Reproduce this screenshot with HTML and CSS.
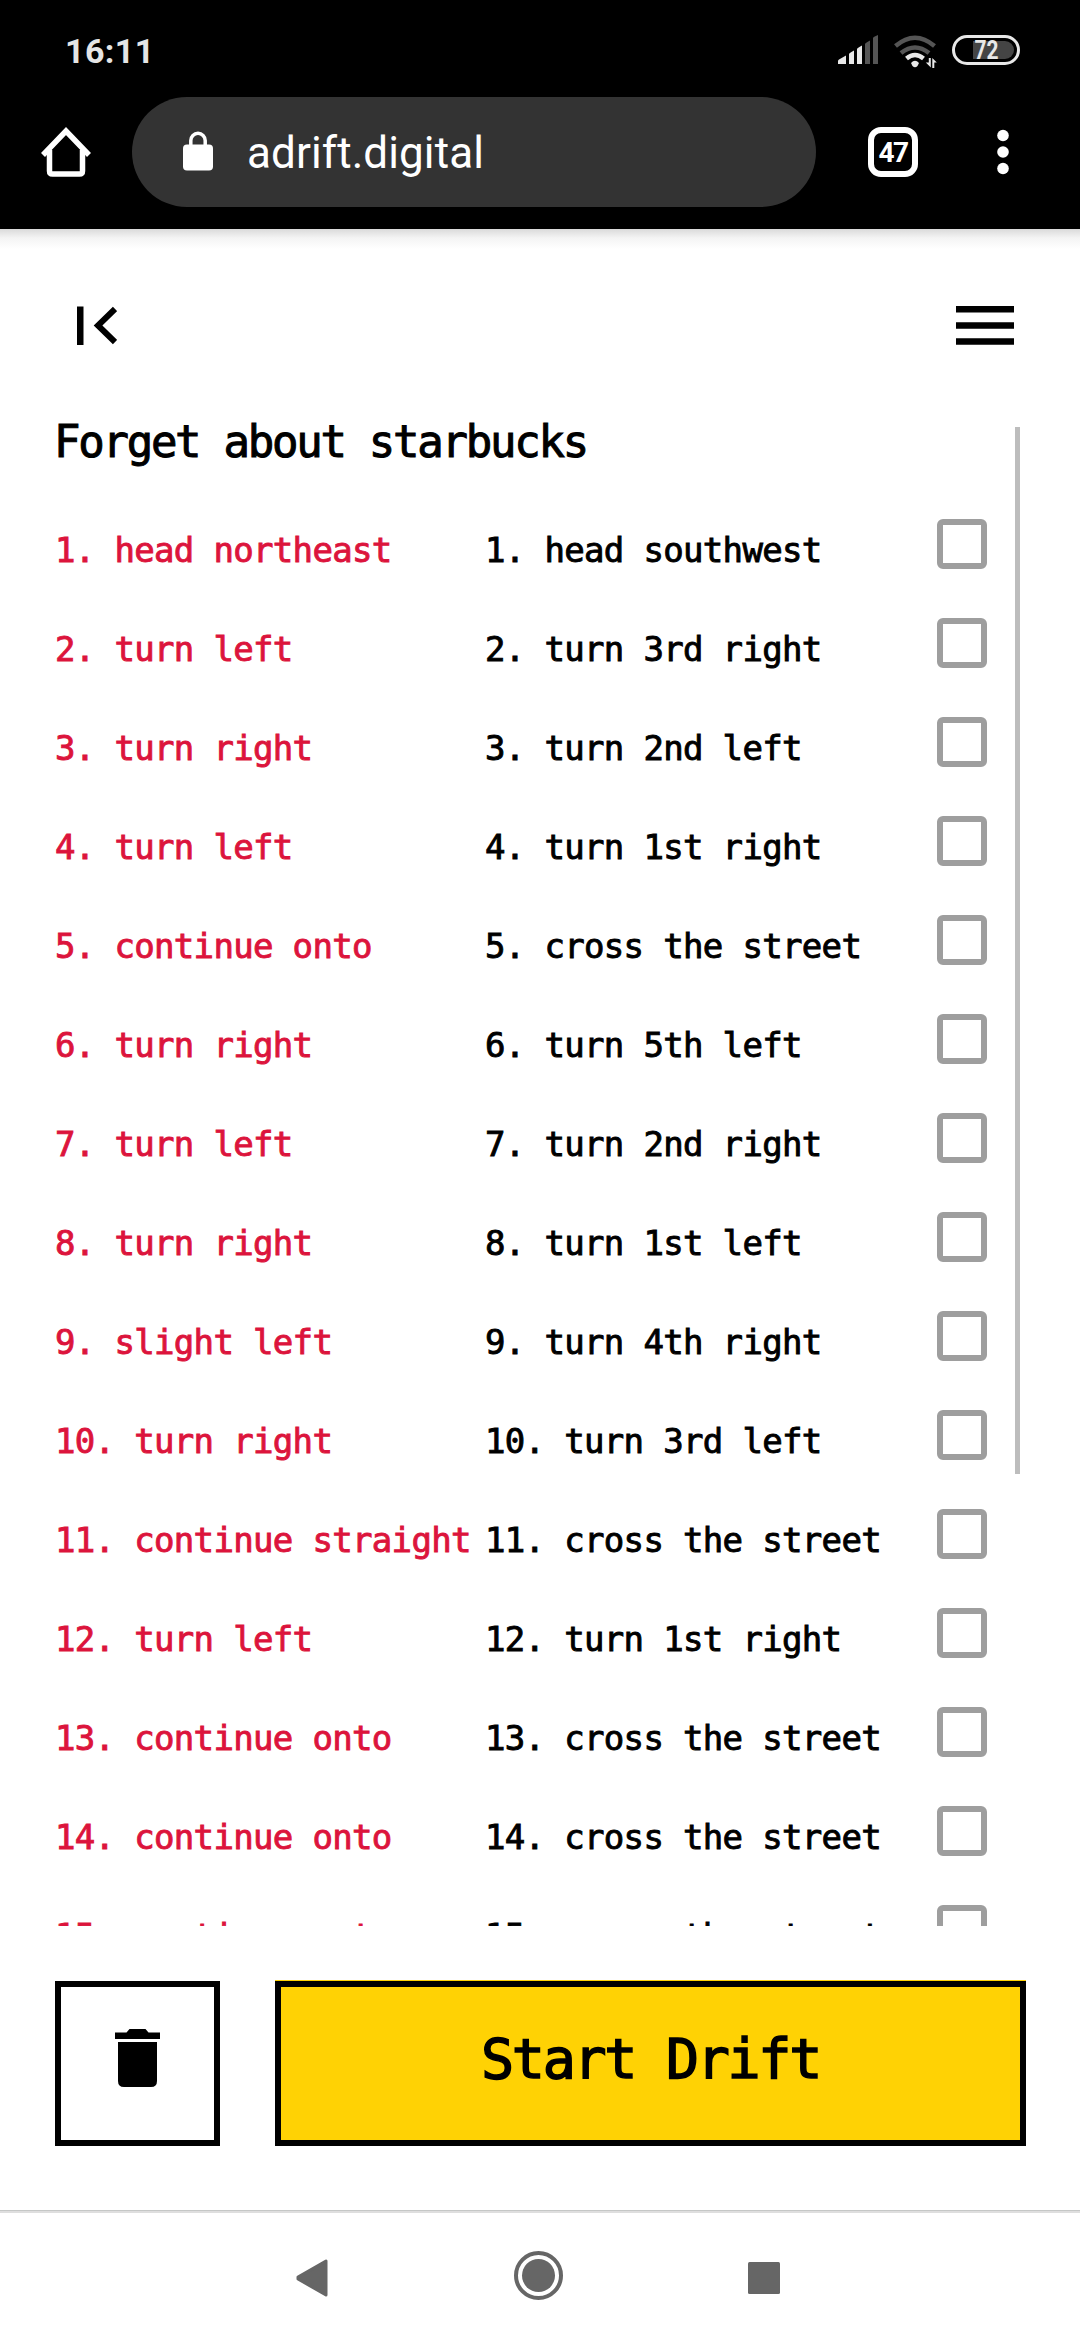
FILE: index.html
```html
<!DOCTYPE html>
<html lang="en">
<head>
<meta charset="utf-8">
<title>adrift.digital</title>
<link rel="stylesheet" href="styles.css">
</head>
<body>
<div class="screen">
  <header class="chrome">
    <div class="status">
      <span class="clock">16:11</span>
      <svg class="signals" width="190" height="40" viewBox="834 30 190 40">
        <g fill="#e8e8e8">
          <path d="M838 64v-3q0-1 1-1.500l7-4V64zM849 64V54q0-1 5-3.500V64zM857 64V49q0-1 5-3.500V64z"/>
          <path fill="#555" d="M865 64V44q0-1 5-3.500V64zM873 64V38q0-1 5-3V64z"/>
        </g>
        <g fill="none" stroke-width="4.500" stroke-linecap="butt">
          <path stroke="#555" d="M895.500 46q19.500-16.500 39 0M901 53q14-11 28 0"/>
          <path stroke="#e8e8e8" d="M906.500 58.500q8.500-7 17 0"/>
        </g>
        <path fill="#e8e8e8" d="M911 63q4-4.500 8 0l-1.500 3q-2.500 2.500-5 0zM928.800 58h2v9.500l-5-5h3zM932.300 68v-10l4.500 4.500h-2.500V68z"/>
        <path fill="#444" d="M973 41h32a9 9 0 0 1 0 18h-32z"/>
        <rect x="953.500" y="36.500" width="65" height="27" rx="13.500" fill="none" stroke="#e8e8e8" stroke-width="3"/>
        <text class="level" x="986.500" y="58.500" text-anchor="middle" textLength="24" lengthAdjust="spacingAndGlyphs">72</text>
      </svg>
    </div>
    <div class="toolbar">
      <svg class="home" width="50" height="50" viewBox="0 0 50 50" fill="none" stroke="#fff" stroke-width="5.500" stroke-linejoin="round">
        <path d="M2 28 25 4l23 24" stroke-linejoin="miter"/><path d="M8.500 23v21q0 3 3 3h27q3 0 3-3V23"/>
      </svg>
      <div class="omnibox">
        <svg width="30" height="40" viewBox="0 0 30 40"><rect y="13.500" width="30" height="26" rx="4" fill="#fff"/><path d="M7.800 15V9.500a7.200 7.200 0 0 1 14.400 0V15" fill="none" stroke="#fff" stroke-width="3.500"/></svg>
        <span class="url">adrift.digital</span>
      </div>
      <span class="tabs">47</span>
      <svg class="dots" width="12" height="46" viewBox="0 0 12 46" fill="#fff"><circle cx="6" cy="6.500" r="5.800"/><circle cx="6" cy="23" r="5.800"/><circle cx="6" cy="39.500" r="5.800"/></svg>
    </div>
  </header>

  <nav class="topnav">
    <svg width="40" height="40" viewBox="0 0 40 40"><path d="M0 .5h6.500V39H0z"/><path d="M38 3 21 19.500 38 36" fill="none" stroke="#000" stroke-width="6"/></svg>
    <svg width="58" height="40" viewBox="0 0 58 40"><path d="M0 0h58v6.500H0zM0 16.200h58v6.500H0zM0 32.300h58v6.500H0z"/></svg>
  </nav>

  <main class="list">
    <div class="steps">
      <h1>Forget about starbucks</h1>
      <div class="row"><span class="from">1. head northeast</span><span>1. head southwest</span><i class="box"></i></div>
      <div class="row"><span class="from">2. turn left</span><span>2. turn 3rd right</span><i class="box"></i></div>
      <div class="row"><span class="from">3. turn right</span><span>3. turn 2nd left</span><i class="box"></i></div>
      <div class="row"><span class="from">4. turn left</span><span>4. turn 1st right</span><i class="box"></i></div>
      <div class="row"><span class="from">5. continue onto</span><span>5. cross the street</span><i class="box"></i></div>
      <div class="row"><span class="from">6. turn right</span><span>6. turn 5th left</span><i class="box"></i></div>
      <div class="row"><span class="from">7. turn left</span><span>7. turn 2nd right</span><i class="box"></i></div>
      <div class="row"><span class="from">8. turn right</span><span>8. turn 1st left</span><i class="box"></i></div>
      <div class="row"><span class="from">9. slight left</span><span>9. turn 4th right</span><i class="box"></i></div>
      <div class="row"><span class="from">10. turn right</span><span>10. turn 3rd left</span><i class="box"></i></div>
      <div class="row"><span class="from">11. continue straight</span><span>11. cross the street</span><i class="box"></i></div>
      <div class="row"><span class="from">12. turn left</span><span>12. turn 1st right</span><i class="box"></i></div>
      <div class="row"><span class="from">13. continue onto</span><span>13. cross the street</span><i class="box"></i></div>
      <div class="row"><span class="from">14. continue onto</span><span>14. cross the street</span><i class="box"></i></div>
      <div class="row"><span class="from">15. continue onto</span><span>15. cross the street</span><i class="box"></i></div>
    </div>
    <div class="thumb"></div>
  </main>

  <div class="actions">
    <button class="trash" aria-label="Delete">
      <svg width="45" height="58" viewBox="0 0 45 58"><path d="M0 3.500h11.500L14.500 0h16L33.500 3.500H45V10H0zM3 13h39v39q0 6-6 6H9q-6 0-6-6z"/></svg>
    </button>
    <button class="start">Start Drift</button>
  </div>

  <footer class="sysnav">
    <svg width="32" height="38" viewBox="0 0 32 38"><path d="M2 18 30 2v34L2 20z" fill="#666" stroke="#666" stroke-width="3" stroke-linejoin="round"/></svg>
    <svg class="circle" width="49" height="49" viewBox="0 0 49 49"><circle cx="24.500" cy="24.500" r="22.500" fill="none" stroke="#666" stroke-width="4"/><circle cx="24.500" cy="24.500" r="16.500" fill="#666"/></svg>
    <svg width="32" height="32" viewBox="0 0 32 32"><rect width="32" height="32" rx="1.500" fill="#666"/></svg>
  </footer>
</div>
</body>
</html>
```
FILE: styles.css
```css
* { box-sizing: border-box; }
body { margin: 0; background: #fff; }
svg { display: block; flex: none; }
.screen {
  width: 1080px;
  height: 2340px;
  overflow: hidden;
  display: flex;
  flex-direction: column;
  background: #fff;
  color: #000;
  font-family: "DejaVu Sans Mono", "Liberation Mono", monospace;
}
.chrome {
  height: 229px;
  flex: none;
  background: #000;
  color: #fff;
  font-family: Roboto, sans-serif;
}
.status {
  height: 97px;
  padding: 30px 56px 0 65px;
  display: flex;
  justify-content: space-between;
}
.clock {
  font-size: 34px;
  line-height: 42px;
  font-weight: 700;
  letter-spacing: .4px;
  color: #e5e5e5;
}
.level { font: 700 25px Roboto, sans-serif; fill: #e8e8e8; }
.toolbar {
  height: 110px;
  padding: 0 71px 0 41px;
  display: flex;
  align-items: center;
}
.omnibox {
  width: 684px;
  height: 110px;
  margin-left: 41px;
  padding-left: 51px;
  border-radius: 55px;
  background: #333;
  display: flex;
  align-items: center;
  gap: 34px;
  font-size: 44px;
  letter-spacing: .1px;
}
.url { padding-top: 2px; }
.omnibox svg { margin-bottom: 2px; }
.tabs {
  width: 50px;
  height: 50px;
  margin-left: 52px;
  border: 6px solid #fff;
  border-radius: 13px;
  font-size: 28px;
  font-weight: 700;
  line-height: 39px;
  text-align: center;
  letter-spacing: -1.500px;
}
.dots { margin-left: auto; }
.topnav {
  height: 178px;
  flex: none;
  padding: 77px 66px 0 77px;
  display: flex;
  justify-content: space-between;
  background: linear-gradient(#dadada, #f4f4f4 9px, #fff 20px);
}
.list {
  height: 1519px;
  flex: none;
  overflow: hidden;
  padding: 20px 60px 0 55px;
  display: flex;
  justify-content: space-between;
}
h1 {
  height: 92px;
  margin: 0 0 0 -1px;
  font-size: 44px;
  font-weight: 400;
  line-height: 30px;
  letter-spacing: -2.270px;
  -webkit-text-stroke: 1px #000;
}
.row {
  height: 99px;
  display: grid;
  grid-template-columns: 430px 452px 50px;
  align-items: start;
  font-size: 34px;
  line-height: 62px;
  letter-spacing: -.670px;
  white-space: nowrap;
  -webkit-text-stroke: .9px currentColor;
}
.from { color: #dc143c; }
.box {
  width: 50px;
  height: 50px;
  border: 6px solid #9e9e9e;
  border-radius: 6px;
}
.thumb { width: 5px; height: 1047px; background: #bdbdbd; }
.actions {
  flex: none;
  height: 284px;
  padding: 54px 54px 0 55px;
  display: flex;
  align-items: flex-start;
  gap: 55px;
}
button {
  padding: 0;
  font-family: inherit;
  color: #000;
  border: 6px solid #000;
  border-radius: 0;
}
.trash {
  width: 165px;
  height: 165px;
  margin-top: 1px;
  padding-bottom: 11px;
  background: #fff;
  display: flex;
  align-items: center;
  justify-content: center;
}
.start {
  width: 751px;
  height: 165px;
  margin-top: 1px;
  padding-bottom: 10px;
  background: #ffd204;
  box-shadow: 0 -1px #ffd204;
  font-size: 55px;
  letter-spacing: -2.300px;
  -webkit-text-stroke: 1.500px #000;
}
.sysnav {
  height: 130px;
  flex: none;
  padding: 3px 300px 0 296px;
  display: flex;
  align-items: center;
  justify-content: space-between;
  background: linear-gradient(#c5c7c6 1px, #dedede 1px, #dedede 3px, #fff 3px);
}
.sysnav svg { margin-top: 3px; }
.sysnav .circle { margin: 0 0 2px; }
```
